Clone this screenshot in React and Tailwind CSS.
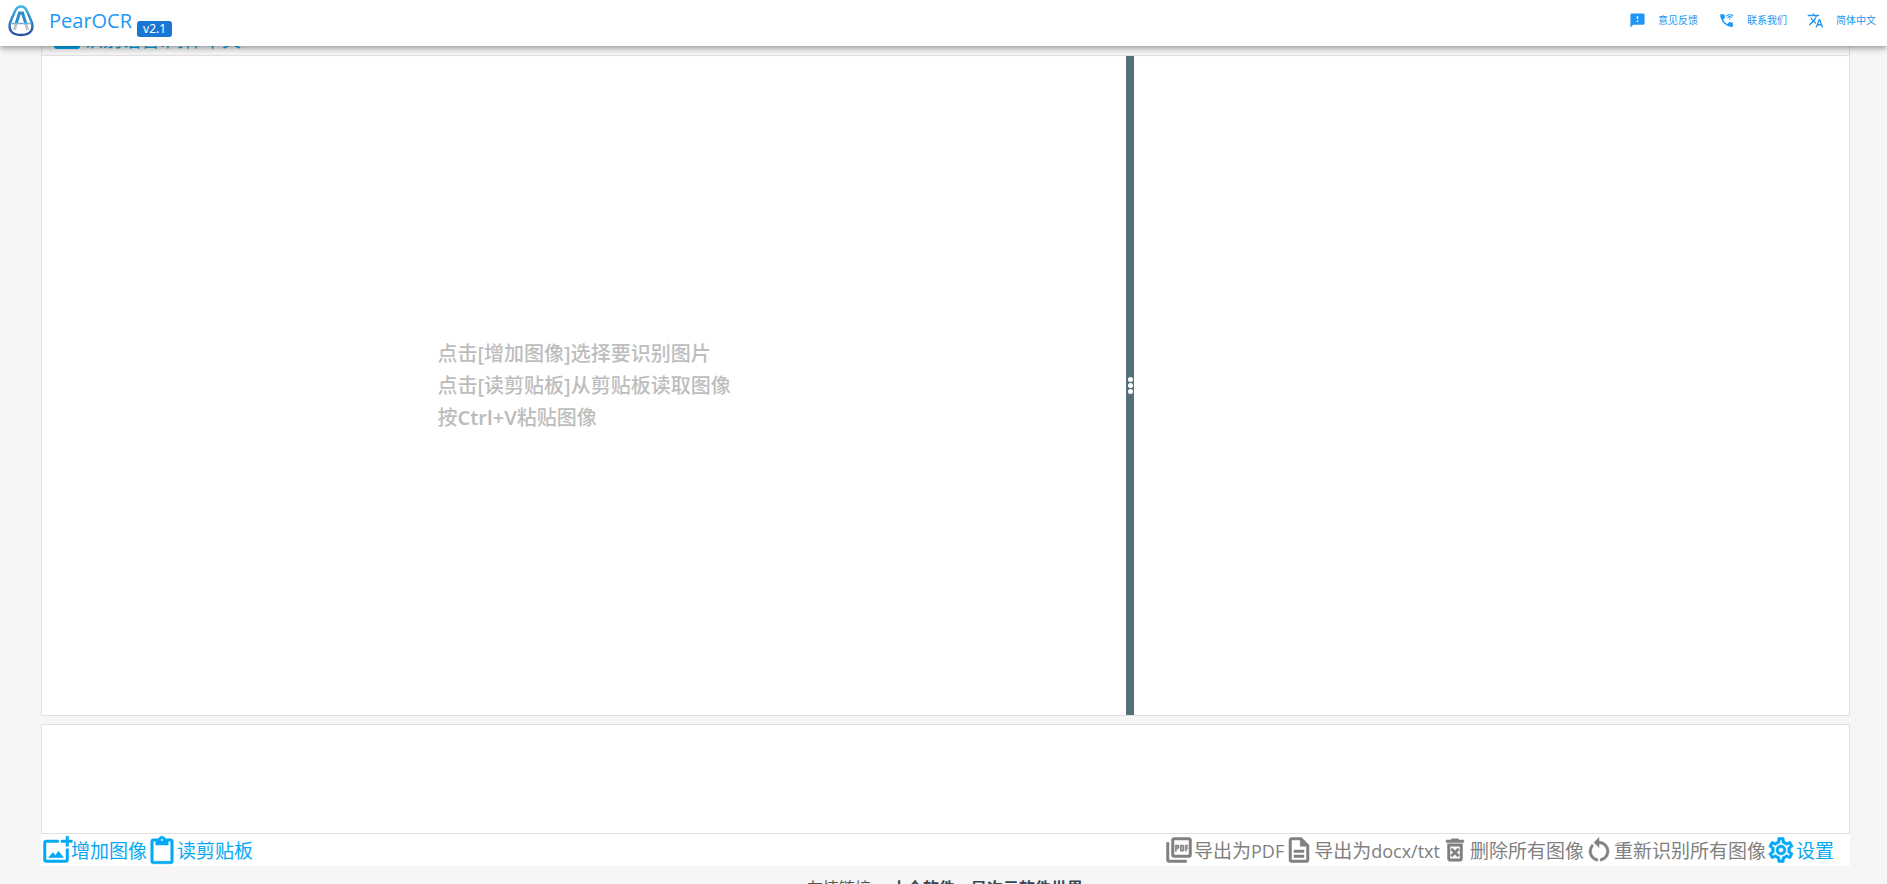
import { MdFeedback, MdWifiCalling3, MdTranslate, MdOutlineSettings, MdRestartAlt } from 'react-icons/md';

const makeIcon = (d) => ({ className }) => (
  <svg viewBox="0 0 24 24" fill="currentColor" stroke="currentColor" aria-hidden="true" className={className}>
    <path d={d} />
  </svg>
);

const AddImageIcon = makeIcon('M5 4h9v2H4v14h16v-9h2v9a2 2 0 0 1-2 2H4a2 2 0 0 1-2-2V6a2 2 0 0 1 2-2zm15 0V1h2v3h3v2h-3v3h-2V6h-4V4zM6 18l3.500-4 2 2.300 2.500-3.300 4 5z');
const ClipboardIcon = makeIcon('M19 3h-4.180C14.400 1.840 13.300 1 12 1s-2.400.840-2.820 2H5a2 2 0 0 0-2 2v16a2 2 0 0 0 2 2h14a2 2 0 0 0 2-2V5a2 2 0 0 0-2-2m-7 0a1 1 0 1 1 0 2 1 1 0 0 1 0-2m7 18H5V5h2v3h10V5h2z');
const PdfIcon = makeIcon('M20 2H8a2 2 0 0 0-2 2v12a2 2 0 0 0 2 2h12a2 2 0 0 0 2-2V4a2 2 0 0 0-2-2m0 14H8V4h12zM4 6H2v14a2 2 0 0 0 2 2h14v-2H4zm12 6V9a1 1 0 0 0-1-1h-2v5h2a1 1 0 0 0 1-1m-2-3h1v3h-1zm4 2h1v-1h-1V9h1V8h-2v5h1zm-8 0h1a1 1 0 0 0 1-1V9a1 1 0 0 0-1-1H9v5h1zm0-2h1v1h-1z');
const DocumentIcon = makeIcon('M6 2h8l6 6v12a2 2 0 0 1-2 2H6a2 2 0 0 1-2-2V4a2 2 0 0 1 2-2m0 2v16h12V9h-5V4zm2 8h8v2H8zm0 4h8v2H8z');
const TrashIcon = makeIcon('M14.120 10.470 12 12.590l-2.130-2.120-1.410 1.410L10.590 14l-2.120 2.120 1.410 1.410L12 15.410l2.120 2.120 1.410-1.410L13.410 14l2.120-2.120zM15.500 4l-1-1h-5l-1 1H5v2h14V4zM6 19a2 2 0 0 0 2 2h8a2 2 0 0 0 2-2V7H6zM8 9h8v10H8z');

const links = [
  { label: '意见反馈', icon: MdFeedback },
  { label: '联系我们', icon: MdWifiCalling3 },
  { label: '简体中文', icon: MdTranslate },
];

const inputTools = [
  { label: '增加图像', icon: AddImageIcon },
  { label: '读剪贴板', icon: ClipboardIcon },
];

const outputTools = [
  { label: '导出为', format: 'PDF', icon: PdfIcon },
  { label: '导出为', format: 'docx/txt', icon: DocumentIcon },
  { label: '删除所有图像', icon: TrashIcon },
  { label: '重新识别所有图像', icon: MdRestartAlt },
];

const Logo = () => (
  <svg viewBox="0 0 28 34" className="h-[34px] w-[28px]" fill="none" aria-hidden="true">
    <defs>
      <linearGradient id="pear" x1="0" y1="0" x2="0" y2="1">
        <stop offset="0" stopColor="#42b5e0" />
        <stop offset="0.5" stopColor="#2e86c8" />
        <stop offset="1" stopColor="#2b4da0" />
      </linearGradient>
    </defs>
    <path d="M14 2.500c-3 0-4.600 1.700-5.800 4.200L3.300 18C1 25 4 31 14 31s13-6 10.700-13L19.800 6.700C18.600 4.200 17 2.500 14 2.500z" stroke="url(#pear)" strokeWidth="2.500" />
    <path d="M9 20 7.500 26M19 20l1.500 6" stroke="#c4c4c4" strokeWidth="3" />
    <path d="M9 20 12.500 9h3L19 20" stroke="#2d8bc9" strokeWidth="3" />
    <path d="M3.500 19.500h21" stroke="#69b5dc" strokeWidth="1.500" />
  </svg>
);

const ToolButton = ({ label, format, icon: ToolIcon }) => (
  <button type="button" className="flex items-center whitespace-nowrap">
    <ToolIcon className="size-[30px] shrink-0 overflow-visible [stroke-width:0.4] [&_path[fill=none]]:stroke-none" />
    <span className="pt-px">
      {label}
      {format && <span className="text-[18px]">{format}</span>}
    </span>
  </button>
);

const App = () => {
  return (
    <div className="flex h-screen flex-col overflow-hidden bg-[#f6f6f6] font-['Noto_Sans','Noto_Sans_CJK_SC',sans-serif]">
      <header className="relative z-10 flex h-[46px] shrink-0 items-center justify-between bg-white pr-[11px] pl-[7px] text-[#2196f3] shadow-[0_2px_4px_-1px_rgba(0,0,0,0.2),0_4px_5px_0_rgba(0,0,0,0.14),0_1px_10px_0_rgba(0,0,0,0.12)]">
        <div className="flex items-center pb-1">
          <Logo />
          <h1 className="ml-[14px] font-['Open_Sans',sans-serif] text-[20px] leading-7">PearOCR</h1>
          <span className="mt-[15px] ml-[5px] rounded-[3px] bg-[#1976d2] px-[6px] text-[12px] leading-4 text-white">v2.1</span>
        </div>
        <nav className="flex items-center gap-5 pb-[6px] text-[10px]">
          {links.map(({ label, icon: LinkIcon }) => (
            <a key={label} href="#" className="flex items-center gap-[12px]">
              <LinkIcon className="size-[17px]" />
              {label}
            </a>
          ))}
        </nav>
      </header>

      <main className="mr-[37px] ml-[41px] flex min-h-0 flex-1 flex-col">
        <div className="flex h-[9px] shrink-0 items-end overflow-hidden border-x border-[#e0e0e0] pl-3 text-[19px] leading-[30px] text-[#03a9f4]">
          <button type="button" className="flex items-end gap-1">
            <span className="mb-[6px] h-[22px] w-[26px] rounded-[3px] border-3 border-current" />
            识别语言:简体中文
          </button>
        </div>

        <div className="flex min-h-0 flex-1 border border-[#e0e0e0] bg-white">
          <section className="flex w-3/5 items-center justify-center">
            <div className="text-[20px] leading-8 font-medium text-[#bdbdbd]">
              <p>点击[增加图像]选择要识别图片</p>
              <p>点击[读剪贴板]从剪贴板读取图像</p>
              <p>按<span className="font-semibold">Ctrl+V</span>粘贴图像</p>
            </div>
          </section>
          <div className="flex w-2 shrink-0 flex-col items-center justify-center gap-px bg-[#546e7a]">
            <span className="size-[5px] rounded-full bg-white" />
            <span className="size-[5px] rounded-full bg-white" />
            <span className="size-[5px] rounded-full bg-white" />
          </div>
          <section className="flex-1" />
        </div>

        <div className="mt-2 h-[110px] shrink-0 border border-[#e0e0e0] bg-white" />

        <div className="flex h-8 shrink-0 items-center justify-between bg-white pr-4 font-['Open_Sans','Noto_Sans_CJK_SC',sans-serif] text-[19px] leading-[30px]">
          <div className="flex text-[#03a9f4]">
            {inputTools.map((tool) => (
              <ToolButton key={tool.label} {...tool} />
            ))}
          </div>
          <div className="flex text-[#808080]">
            {outputTools.map((tool) => (
              <ToolButton key={tool.label + tool.format} {...tool} />
            ))}
            <div className="flex text-[#03a9f4]">
              <ToolButton label="设置" icon={MdOutlineSettings} />
            </div>
          </div>
        </div>
      </main>

      <footer className="flex h-[18px] shrink-0 items-start justify-center gap-5 overflow-hidden pt-[10px] pl-[3px] text-[16px] leading-6 text-[#555555]">
        <span>友情链接</span>
        <span className="flex gap-4 font-bold text-[#37474f]">
          <a href="#">小众软件</a>
          <a href="#">异次元软件世界</a>
        </span>
      </footer>
    </div>
  );
};

export default App;
